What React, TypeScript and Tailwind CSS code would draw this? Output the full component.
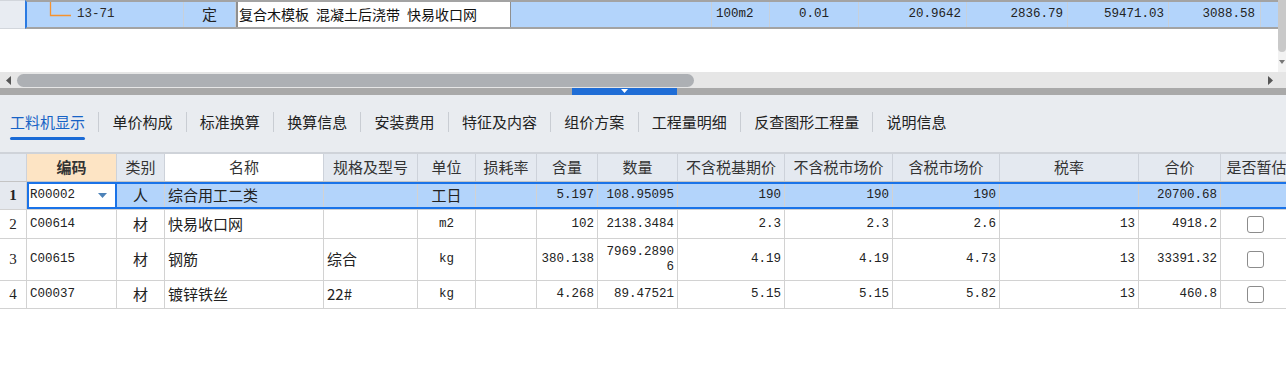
import React from 'react';

const W = [
  'w-[90px]', 'w-[48px]', 'w-[159px]', 'w-[94px]', 'w-[58px]', 'w-[61px]', 'w-[61px]',
  'w-[80px]', 'w-[107px]', 'w-[108px]', 'w-[107px]', 'w-[139px]', 'w-[82px]', 'w-[72px]',
];
const HEADERS = ['编码', '类别', '名称', '规格及型号', '单位', '损耗率', '含量', '数量', '不含税基期价', '不含税市场价', '含税市场价', '税率', '合价', '是否暂估'];
const ALIGN = ['l', 'c', 'l', 'l', 'c', 'r', 'r', 'r', 'r', 'r', 'r', 'r', 'r', 'c'];
const KIND = ['m', 's', 's', 's', 'm', 'm', 'm', 'm', 'm', 'm', 'm', 'm', 'm', 'm'];

type Row = { h: string; cells: string[]; check: boolean };

const ROWS: Row[] = [
  { h: 'h-[28px]', cells: ['R00002', '人', '综合用工二类', '', '工日', '', '5.197', '108.95095', '190', '190', '190', '', '20700.68'], check: false },
  { h: 'h-[29px]', cells: ['C00614', '材', '快易收口网', '', 'm2', '', '102', '2138.3484', '2.3', '2.3', '2.6', '13', '4918.2'], check: true },
  { h: 'h-[42px]', cells: ['C00615', '材', '钢筋', '综合', 'kg', '', '380.138', '7969.28906', '4.19', '4.19', '4.73', '13', '33391.32'], check: true },
  { h: 'h-[28px]', cells: ['C00037', '材', '镀锌铁丝', '22#', 'kg', '', '4.268', '89.47521', '5.15', '5.15', '5.82', '13', '460.8'], check: true },
];

const TABS = ['工料机显示', '单价构成', '标准换算', '换算信息', '安装费用', '特征及内容', '组价方案', '工程量明细', '反查图形工程量', '说明信息'];

const MONO = "font-['Liberation_Mono','Noto_Sans_CJK_SC',monospace] text-[12.5px]";
const SANS = "font-['Noto_Sans_CJK_SC',sans-serif] text-[15px]";

function alignCls(a: string) {
  if (a === 'l') return 'justify-start pl-[3px] text-left';
  if (a === 'r') return 'justify-end pr-[3px] text-right';
  return 'justify-center text-center';
}

function TopCell({ w, children, cls = '' }: { w: string; children?: React.ReactNode; cls?: string }) {
  return <div className={`${w} shrink-0 h-full flex items-center border-r border-[#c7d0da] ${cls}`}>{children}</div>;
}

export default function App() {
  return (
    <div className="w-[1286px] h-[390px] overflow-hidden bg-white text-[#222] font-['Noto_Sans_CJK_SC',sans-serif] flex flex-col">
      {/* upper grid */}
      <div className="h-[72px] flex shrink-0">
        <div className="flex-1 flex flex-col">
          <div className="flex h-[29px]">
            <div className="w-[25px] shrink-0 bg-[#e8ecf2] border-y border-[#d2d6dc]" />
            <div className="flex-1 flex bg-[#b3d4fb] border-y-2 border-[#a3a3a3] border-l-2 border-l-[#2a7ae2] whitespace-nowrap">
              <TopCell w="w-[157px]" cls={MONO}>
                <div className="w-[22px] shrink-0" />
                <svg width="24" height="25" className="shrink-0 self-start">
                  <path d="M1.5 0 V13.5 H22" stroke="#f5922f" strokeWidth="1.3" fill="none" />
                </svg>
                <span className="ml-[4px] text-[#2a2a2a]">13-71</span>
              </TopCell>
              <TopCell w="w-[52px]" cls={`${SANS} justify-center`}>定</TopCell>
              <TopCell w="w-[275px]" cls="bg-white border-x-2 border-x-[#8f8f8f] pl-[1px] font-['Noto_Sans_CJK_SC',sans-serif] text-[14px] text-[#111]">
                复合木模板{'\u2002'}混凝土后浇带{'\u2002'}快易收口网
              </TopCell>
              <TopCell w="w-[201px]" />
              <TopCell w="w-[58px]" cls={`${MONO} pl-[4px]`}>100m2</TopCell>
              <TopCell w="w-[89px]" cls={`${MONO} justify-center`}>0.01</TopCell>
              <TopCell w="w-[108px]" cls={`${MONO} justify-end pr-[5px]`}>20.9642</TopCell>
              <TopCell w="w-[101px]" cls={`${MONO} justify-end pr-[4px]`}>2836.79</TopCell>
              <TopCell w="w-[101px]" cls={`${MONO} justify-end pr-[4px]`}>59471.03</TopCell>
              <TopCell w="w-[92px]" cls={`${MONO} justify-end pr-[5px]`}>3088.58</TopCell>
              <div className="flex-1" />
            </div>
          </div>
        </div>
        <div className="w-[8px] shrink-0 bg-[#f2f2f2] flex flex-col items-center">
          <div className="w-full h-[52px] bg-[#c9c9c9] rounded-b-[4px]" />
          <svg width="6" height="4" className="mt-[8px]">
            <polygon points="0,0 6,0 3,4" fill="#777" />
          </svg>
        </div>
      </div>

      {/* horizontal scrollbar */}
      <div className="h-[16px] shrink-0 bg-[#e6e6e6] flex items-center">
        <svg width="5" height="9" className="ml-[6px] shrink-0">
          <polygon points="5,0 5,9 0,4.5" fill="#555" />
        </svg>
        <div className="ml-[6px] w-[677px] h-[13px] rounded-full bg-[#adb0b4]" />
        <div className="flex-1" />
        <svg width="5" height="9" className="mr-[13px] shrink-0">
          <polygon points="0,0 0,9 5,4.5" fill="#555" />
        </svg>
      </div>

      {/* splitter */}
      <div className="h-[7px] shrink-0 bg-[#a9a9a9] flex">
        <div className="ml-[572px] w-[105px] h-full bg-[#1f6dd6] flex justify-center items-start pt-[1px]">
          <svg width="7" height="4">
            <polygon points="0,0 7,0 3.5,4" fill="#fff" />
          </svg>
        </div>
      </div>

      {/* tabs */}
      <div className="h-[57px] shrink-0 bg-[#e9ecf0] flex items-start pt-[17px] pl-[10px] whitespace-nowrap">
        {TABS.map((t, i) => (
          <div key={t} className="flex items-start">
            <div className="flex flex-col">
              <span className={`text-[15px] leading-[20px] ${i === 0 ? 'text-[#1763c6]' : 'text-[#222]'}`}>{t}</span>
              {i === 0 && <div className="mt-[5px] h-[3px] rounded-full bg-[#1b6bd6]" />}
            </div>
            {i < TABS.length - 1 && <div className="mx-[13.2px] w-px h-[20px] bg-[#c9cdd3]" />}
          </div>
        ))}
      </div>

      {/* table header */}
      <div className="flex h-[30px] shrink-0 border-t-2 border-[#cfd3d9] border-b border-b-[#c4c4c4] bg-[#e4e9f0] whitespace-nowrap">
        <div className="w-[27px] shrink-0 border-r border-[#cdd2da]" />
        {HEADERS.map((h, i) => (
          <div
            key={h}
            className={`${W[i]} shrink-0 flex items-center justify-center border-r border-[#cdd2da] text-[15px] text-[#333] ${i === 0 ? 'bg-[#fde4c4] font-bold text-[#222]' : ''} ${i === 2 ? 'bg-white' : ''}`}
          >
            {h}
          </div>
        ))}
      </div>

      {/* rows */}
      {ROWS.map((r, ri) => {
        const sel = ri === 0;
        return (
          <div key={ri} className={`flex ${r.h} shrink-0 border-b border-[#d2d2d2] whitespace-nowrap`}>
            <div
              className={`w-[27px] shrink-0 flex items-center justify-center border-r border-[#d2d2d2] font-['Liberation_Serif',serif] text-[15px] ${sel ? 'bg-[#e5e9ef] font-bold' : 'bg-white'}`}
            >
              {ri + 1}
            </div>
            <div className={`flex ${sel ? 'bg-[#b3d4fb] outline-2 outline-[#1a73e8] -outline-offset-2' : ''}`}>
              {W.map((w, ci) => {
                const v = ci < r.cells.length ? r.cells[ci] : '';
                const kind = KIND[ci] === 'm' && v && /[\u4e00-\u9fff]/.test(v) ? 's' : KIND[ci];
                const isQty = ci === 7 && v.length > 9;
                if (ci === 0 && sel) {
                  return (
                    <div key={ci} className={`${w} shrink-0 flex items-center bg-white outline-2 outline-[#1a73e8] -outline-offset-2 pl-[3px] pr-[10px] ${MONO}`}>
                      <span className="flex-1">{v}</span>
                      <svg width="9" height="5">
                        <polygon points="0,0 9,0 4.5,5" fill="#4d82b8" />
                      </svg>
                    </div>
                  );
                }
                if (ci === 13) {
                  return (
                    <div key={ci} className={`${w} shrink-0 flex items-center justify-center border-r border-[#d2d2d2] pr-[2px]`}>
                      {r.check && <div className="w-[17px] h-[17px] rounded-[3px] border border-[#8c8c8c] bg-white" />}
                    </div>
                  );
                }
                if (isQty) {
                  return (
                    <div key={ci} className={`${w} shrink-0 flex items-center border-r border-[#d2d2d2] pl-[5px] pr-[3px] ${MONO}`}>
                      <span className="block w-full whitespace-normal break-all text-right leading-[15px]">{v}</span>
                    </div>
                  );
                }
                return (
                  <div
                    key={ci}
                    className={`${w} shrink-0 flex items-center border-r border-[#d2d2d2] ${alignCls(ALIGN[ci])} ${kind === 'm' ? MONO : SANS}`}
                  >
                    {v}
                  </div>
                );
              })}
            </div>
          </div>
        );
      })}
      <div className="flex-1 bg-white" />
    </div>
  );
}
